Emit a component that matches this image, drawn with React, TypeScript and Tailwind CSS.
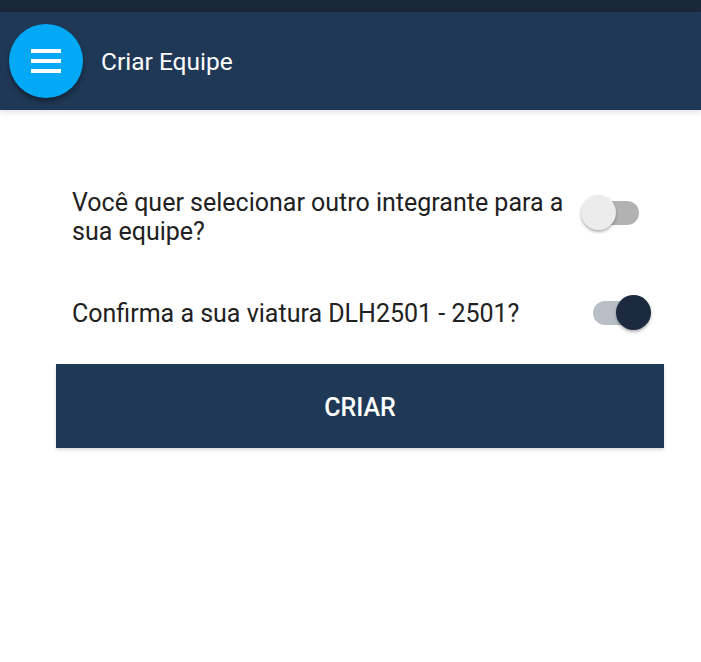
import React, { useState } from 'react'

const Toggle = ({
  on,
  onClick,
  className = '',
}: {
  on: boolean
  onClick: () => void
  className?: string
}) => {
  return (
    <button
      onClick={onClick}
      className={`relative w-[70px] h-[36px] shrink-0 cursor-pointer ${className}`}
    >
      <span
        className={`absolute left-[12px] top-[6px] w-[46px] h-[24px] rounded-full ${
          on ? 'bg-[#b8bfc7]' : 'bg-[#b2b2b2]'
        }`}
      />
      <span
        className={`absolute top-0 w-[35px] h-[35px] rounded-full shadow-[0_2px_3px_rgba(0,0,0,0.3)] ${
          on ? 'left-[35px] bg-[#1b2a3f]' : 'left-0 bg-[#ececec]'
        }`}
      />
    </button>
  )
}

export default function App() {
  const [outro, setOutro] = useState(false)
  const [viatura, setViatura] = useState(true)

  return (
    <div className="min-h-[662px] bg-white font-['Roboto',sans-serif]">
      <div className="h-[12px] bg-[#19293b]" />
      <header className="h-[98px] bg-[#1f3856] flex items-center pl-[9px] shadow-[0_2px_5px_rgba(0,0,0,0.12)] relative">
        <button className="w-[74px] h-[74px] rounded-full bg-[#03a9f4] flex flex-col items-center justify-center gap-[5.5px] shadow-[0_4px_5px_rgba(0,0,0,0.35)]">
          <span className="w-[30px] h-[4.5px] bg-white" />
          <span className="w-[30px] h-[4.5px] bg-white" />
          <span className="w-[30px] h-[4.5px] bg-white" />
        </button>
        <h1 className="ml-[18px] mt-[3px] text-[24.5px] text-white">Criar Equipe</h1>
      </header>

      <div className="pl-14 pr-[37px] pt-[78px]">
        <div className="flex items-center justify-between pl-4 pr-[13px]">
          <p className="text-[25px] leading-[29px] text-[#212121] max-w-[495px]">
            Você quer selecionar outro integrante para a sua equipe?
          </p>
          <Toggle on={outro} onClick={() => setOutro(!outro)} className="mb-[8px]" />
        </div>

        <div className="flex items-center justify-between pl-4 pr-[13px] mt-[49px]">
          <p className="text-[25px] leading-[29px] text-[#212121]">
            Confirma a sua viatura DLH2501 - 2501?
          </p>
          <Toggle on={viatura} onClick={() => setViatura(!viatura)} />
        </div>

        <button className="mt-[33px] w-full h-[84px] pt-[4px] bg-[#1f3856] text-white text-[25px] font-medium shadow-[0_2px_3px_rgba(0,0,0,0.15)]">
          CRIAR
        </button>
      </div>
    </div>
  )
}
